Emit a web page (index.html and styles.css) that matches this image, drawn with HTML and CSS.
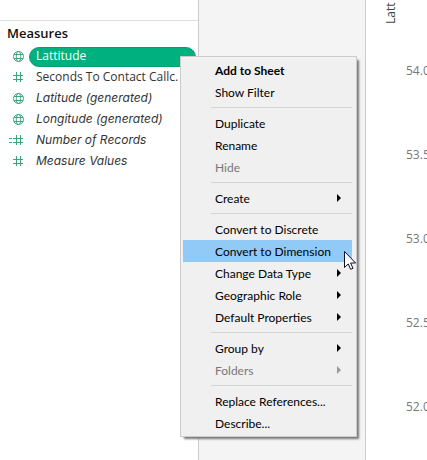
FILE: index.html
```html
<!DOCTYPE html>
<html lang="en">
<head>
<meta charset="utf-8">
<title>Measures</title>
<link rel="stylesheet" href="styles.css">
</head>
<body>
<svg class="defs" aria-hidden="true">
  <symbol id="globe" viewBox="0 0 11 11"><g fill="none" stroke="#3fa57f" stroke-width="1"><circle cx="5.5" cy="5.5" r="5"/><ellipse cx="5.5" cy="5.5" rx="2.2" ry="5"/><path d="M1 3.5h9M1 7.5h9"/></g></symbol>
  <symbol id="hash" viewBox="0 0 11 11"><path fill="none" stroke="#3fa57f" d="M3.5 0v10M7.5 0v10M0 3.5h10M0 7.5h10"/></symbol>
  <symbol id="arrow" viewBox="0 0 4 8"><path fill="currentColor" d="M0 0l4 4-4 4z"/></symbol>
</svg>
<div class="app">
  <aside class="sidebar">
    <h2 class="title">Measures</h2>
    <ul class="fields">
      <li class="field"><svg class="icon"><use href="#globe"/></svg><span class="name selected">Lattitude</span></li>
      <li class="field"><svg class="icon"><use href="#hash"/></svg><span class="name">Seconds To Contact Callc.</span></li>
      <li class="field"><svg class="icon"><use href="#globe"/></svg><span class="name generated">Latitude (generated)</span></li>
      <li class="field"><svg class="icon"><use href="#globe"/></svg><span class="name generated">Longitude (generated)</span></li>
      <li class="field calculated"><svg class="icon"><use href="#hash"/></svg><span class="name generated">Number of Records</span></li>
      <li class="field"><svg class="icon"><use href="#hash"/></svg><span class="name generated">Measure Values</span></li>
    </ul>
  </aside>
  <section class="shelf"></section>
  <main class="chart">
    <div class="axis-title">Latt</div>
    <ol class="axis"><li>54.0</li><li>53.5</li><li>53.0</li><li>52.5</li><li>52.0</li></ol>
  </main>
</div>
<div class="menu">
  <button class="item default">Add to Sheet</button>
  <button class="item">Show Filter</button>
  <hr>
  <button class="item">Duplicate</button>
  <button class="item">Rename</button>
  <button class="item" disabled>Hide</button>
  <hr>
  <button class="item">Create<svg class="arrow"><use href="#arrow"/></svg></button>
  <hr>
  <button class="item">Convert to Discrete</button>
  <button class="item active">Convert to Dimension</button>
  <button class="item">Change Data Type<svg class="arrow"><use href="#arrow"/></svg></button>
  <button class="item">Geographic Role<svg class="arrow"><use href="#arrow"/></svg></button>
  <button class="item">Default Properties<svg class="arrow"><use href="#arrow"/></svg></button>
  <hr>
  <button class="item">Group by<svg class="arrow"><use href="#arrow"/></svg></button>
  <button class="item" disabled>Folders<svg class="arrow"><use href="#arrow"/></svg></button>
  <hr>
  <button class="item">Replace References...</button>
  <button class="item">Describe...</button>
</div>
<svg class="cursor" viewBox="0 0 12 19" aria-hidden="true"><path d="M.5.5v16l3.7-3.6 2.4 5.4 2.4-1-2.4-5.3h5z" fill="#fff" stroke="#112" stroke-width="1"/></svg>
</body>
</html>
```
FILE: styles.css
```css
* { box-sizing: border-box; }

body {
  margin: 0;
  overflow: hidden;
  background: #fff;
  font-family: "Open Sans", "Noto Sans", sans-serif;
  font-size: 12px;
}

.defs { position: absolute; width: 0; height: 0; }

.app {
  display: grid;
  grid-template-columns: 199px 167px 1fr;
  min-height: 100vh;
}

.sidebar {
  padding-top: 20px;
  border-right: 1px solid #ccc;
}

.title {
  margin: 0;
  padding-left: 7px;
  border-top: 1px solid #ddd;
  color: #111;
  font-size: 13px;
  font-weight: 600;
  line-height: 24px;
  padding-bottom: 1px;
}

.fields, .axis { margin: 0; padding: 0; list-style: none; }

.field {
  display: flex;
  align-items: center;
  height: 21px;
  padding-left: 13px;
  padding-right: 2px;
}

.icon { flex: none; width: 11px; height: 11px; }

.name {
  flex: 1;
  height: 20px;
  margin-left: 5px;
  padding-left: 7px;
  color: #333;
  line-height: 18px;
  white-space: nowrap;
}

.selected {
  border: 1px solid #0b9c6c;
  border-radius: 10px;
  padding-left: 6px;
  background: #00b180;
  color: #fff;
  line-height: 16px;
}

.generated { font-family: Inter, sans-serif; font-style: italic; }

.calculated { padding-left: 9px; }

.calculated::before {
  width: 3px;
  height: 3px;
  margin-right: 1px;
  border: solid #3fa57f;
  border-width: 1px 0;
  content: "";
}

.shelf { border-right: 1px solid #ccc; background: #f4f4f4; }

.chart {
  display: flex;
  overflow: hidden;
  color: #777;
  line-height: 16px;
}

.axis-title {
  align-self: flex-start;
  width: 16px;
  height: 24px;
  margin-left: 17px;
  color: #444;
  writing-mode: vertical-rl;
  transform: rotate(180deg);
}

.axis { padding: 29px 0 0 7px; }

.axis li { height: 84px; line-height: 84px; }

.menu {
  position: absolute;
  top: 56px;
  left: 180px;
  width: 177px;
  padding: 2px 4px 2px 2px;
  border: 1px solid #ccc;
  background: #f0f0f0;
  box-shadow: 3px 3px 2px -1px #777;
}

.item {
  display: flex;
  align-items: center;
  justify-content: space-between;
  width: 100%;
  height: 22px;
  padding: 0 11px 0 32px;
  border: 0;
  background: none;
  color: #000;
  font-family: "Lato", sans-serif;
  font-size: 12px;
  white-space: nowrap;
}

.item:disabled { color: #777; }

.default { font-weight: 700; }

.active { background: #91c9f7; }

.menu hr {
  height: 1px;
  margin: 4px 0 4px 28px;
  border: 0;
  background: #d4d4d4;
}

.arrow { width: 4px; height: 8px; }

.item:disabled .arrow { color: #999; }

.cursor {
  position: absolute;
  top: 251px;
  left: 344px;
  width: 12px;
  height: 19px;
}
```
